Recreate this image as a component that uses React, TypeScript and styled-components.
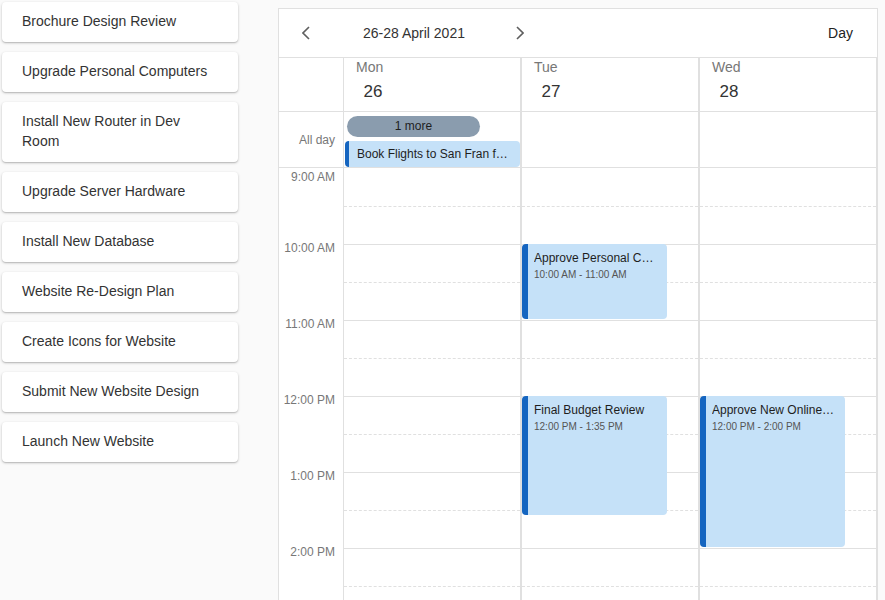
import styled, { createGlobalStyle } from "styled-components";

const HOUR = 76;

const GlobalStyle = createGlobalStyle`
    html, body {
        margin: 0;
        padding: 0;
        overflow: hidden;
        background: #fafafa;
        font-family: "Liberation Sans", Arial, sans-serif;
    }
    * {
        box-sizing: border-box;
    }
`;

const tasks = [
    "Brochure Design Review",
    "Upgrade Personal Computers",
    "Install New Router in Dev Room",
    "Upgrade Server Hardware",
    "Install New Database",
    "Website Re-Design Plan",
    "Create Icons for Website",
    "Submit New Website Design",
    "Launch New Website",
];

const days = [
    { name: "Mon", date: 26 },
    { name: "Tue", date: 27 },
    { name: "Wed", date: 28 },
];

const hours = ["9:00 AM", "10:00 AM", "11:00 AM", "12:00 PM", "1:00 PM", "2:00 PM", "3:00 PM", "4:00 PM"];

interface CalEvent {
    day: number;
    title: string;
    time: string;
    start: number; // hours from 9:00
    duration: number; // hours
}

const events: CalEvent[] = [
    { day: 1, title: "Approve Personal Computer Upgrade Plan", time: "10:00 AM - 11:00 AM", start: 1, duration: 1 },
    { day: 1, title: "Final Budget Review", time: "12:00 PM - 1:35 PM", start: 3, duration: 95 / 60 },
    { day: 2, title: "Approve New Online Marketing Strategy", time: "12:00 PM - 2:00 PM", start: 3, duration: 2 },
];

const Page = styled.div`
    display: flex;
    align-items: flex-start;
`;

const Sidebar = styled.div`
    width: 240px;
    padding: 2px;
    display: flex;
    flex-direction: column;
    gap: 10px;
`;

const TaskCard = styled.div`
    background: #fff;
    border-radius: 4px;
    box-shadow: 0 1px 3px rgba(0, 0, 0, 0.2), 0 1px 1px rgba(0, 0, 0, 0.12);
    padding: 9px 20px 11px;
    font-size: 14px;
    line-height: 20px;
    color: #333;
`;

const Calendar = styled.div`
    margin: 8px 0 0 38px;
    width: 600px;
    background: #fff;
    border: 1px solid #e0e0e0;
`;

const Toolbar = styled.div`
    height: 49px;
    display: flex;
    align-items: center;
    padding: 0 24px 0 7px;
    border-bottom: 1px solid #e0e0e0;
    font-size: 14px;
    color: #333;
`;

const NavButton = styled.button`
    width: 40px;
    height: 40px;
    border: none;
    background: transparent;
    display: flex;
    align-items: center;
    justify-content: center;
    padding: 0;
    cursor: pointer;
`;

const DateLabel = styled.span`
    margin: 0 35px 0 37px;
`;

const ViewLabel = styled.span`
    margin-left: auto;
    color: #222;
`;

const Row = styled.div<{ $height?: number }>`
    display: flex;
    height: ${(p) => (p.$height ? `${p.$height}px` : "auto")};
    border-bottom: ${(p) => (p.$height ? "1px solid #e0e0e0" : "none")};
`;

const Gutter = styled.div`
    width: 65px;
    flex-shrink: 0;
    border-right: 1px solid #e0e0e0;
    display: flex;
    flex-direction: column;
`;

const AllDayLabel = styled.div`
    margin: auto 0;
    padding-right: 8px;
    text-align: right;
    font-size: 12px;
    color: #777;
`;

const DayCell = styled.div<{ $last?: boolean }>`
    width: ${(p) => (p.$last ? 177 : 178)}px;
    flex-shrink: 0;
    border-right: ${(p) => (p.$last ? 1 : 2)}px solid #e0e0e0;
    position: relative;
`;

const DayHead = styled.div`
    padding: 1px 0 0 12px;
`;

const DayName = styled.div`
    font-size: 14px;
    line-height: 16px;
    color: #777;
`;

const DayNumber = styled.div`
    margin-top: 7px;
    width: 34px;
    text-align: center;
    font-size: 17px;
    line-height: 20px;
    color: #333;
`;

const AllDayCell = styled.div`
    padding: 4px 0 0 1px;
    display: flex;
    flex-direction: column;
    gap: 4px;
`;

const MorePill = styled.div`
    margin-left: 2px;
    width: 133px;
    height: 21px;
    border-radius: 11px;
    background: #8a9cae;
    color: #1e1e1e;
    font-size: 12px;
    line-height: 21px;
    text-align: center;
`;

const AllDayEvent = styled.div`
    height: 26px;
    background: #c5e1f8;
    border-left: 4px solid #1565c0;
    border-radius: 4px;
    padding: 0 12px 0 8px;
    font-size: 12px;
    line-height: 26px;
    color: #1e1e1e;
    white-space: nowrap;
    overflow: hidden;
    text-overflow: ellipsis;
`;

const TimeSlot = styled.div<{ $first?: boolean }>`
    height: ${HOUR}px;
    padding-right: 8px;
    text-align: right;
    font-size: 12px;
    line-height: 14px;
    color: #777;
    span {
        display: inline-block;
        transform: translateY(${(p) => (p.$first ? 2 : -3)}px);
    }
`;

const HalfSlot = styled.div<{ $kind: "first" | "half" | "hour" }>`
    height: ${HOUR / 2}px;
    border-top: ${(p) =>
        p.$kind === "first" ? "none" : p.$kind === "half" ? "1px dashed #e0e0e0" : "1px solid #e0e0e0"};
`;

const EventBox = styled.div`
    position: absolute;
    left: 0;
    width: 145px;
    background: #c5e1f8;
    border-left: 6px solid #1565c0;
    border-radius: 4px;
    padding: 7px 9px 0 6px;
    overflow: hidden;
`;

const EventTitle = styled.div`
    font-size: 12px;
    line-height: 14px;
    color: #1e1e1e;
    white-space: nowrap;
    overflow: hidden;
    text-overflow: ellipsis;
`;

const EventTime = styled.div`
    margin-top: 4px;
    font-size: 10px;
    line-height: 12px;
    color: #555;
`;

const Chevron = ({ dir }: { dir: "left" | "right" }) => (
    <svg width="8" height="14" viewBox="0 0 8 14">
        <polyline
            points={dir === "left" ? "7,1 1,7 7,13" : "1,1 7,7 1,13"}
            fill="none"
            stroke="#5f5f5f"
            strokeWidth="1.6"
        />
    </svg>
);

export default function App() {
    return (
        <Page>
            <GlobalStyle />
            <Sidebar>
                {tasks.map((t) => (
                    <TaskCard key={t}>{t}</TaskCard>
                ))}
            </Sidebar>
            <Calendar>
                <Toolbar>
                    <NavButton aria-label="Previous">
                        <Chevron dir="left" />
                    </NavButton>
                    <DateLabel>26-28 April 2021</DateLabel>
                    <NavButton aria-label="Next">
                        <Chevron dir="right" />
                    </NavButton>
                    <ViewLabel>Day</ViewLabel>
                </Toolbar>

                <Row $height={54}>
                    <Gutter />
                    {days.map((d, i) => (
                        <DayCell key={d.name} $last={i === days.length - 1}>
                            <DayHead>
                                <DayName>{d.name}</DayName>
                                <DayNumber>{d.date}</DayNumber>
                            </DayHead>
                        </DayCell>
                    ))}
                </Row>

                <Row $height={56}>
                    <Gutter>
                        <AllDayLabel>All day</AllDayLabel>
                    </Gutter>
                    {days.map((d, i) => (
                        <DayCell key={d.name} $last={i === days.length - 1}>
                            {i === 0 && (
                                <AllDayCell>
                                    <MorePill>1 more</MorePill>
                                    <AllDayEvent>Book Flights to San Fran for Sales Trip</AllDayEvent>
                                </AllDayCell>
                            )}
                        </DayCell>
                    ))}
                </Row>

                <Row>
                    <Gutter>
                        {hours.map((h, i) => (
                            <TimeSlot key={h} $first={i === 0}>
                                <span>{h}</span>
                            </TimeSlot>
                        ))}
                    </Gutter>
                    {days.map((d, i) => (
                        <DayCell key={d.name} $last={i === days.length - 1}>
                            {hours.map((h, j) => (
                                <div key={h}>
                                    <HalfSlot $kind={j === 0 ? "first" : "hour"} />
                                    <HalfSlot $kind="half" />
                                </div>
                            ))}
                            {events
                                .filter((e) => e.day === i)
                                .map((e) => (
                                    <EventBox
                                        key={e.title}
                                        style={{ top: e.start * HOUR, height: e.duration * HOUR - 1 }}
                                    >
                                        <EventTitle>{e.title}</EventTitle>
                                        <EventTime>{e.time}</EventTime>
                                    </EventBox>
                                ))}
                        </DayCell>
                    ))}
                </Row>
            </Calendar>
        </Page>
    );
}
